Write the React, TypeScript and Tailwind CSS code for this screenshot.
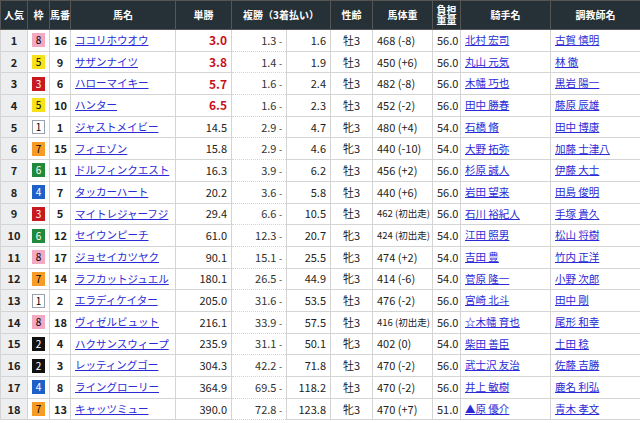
const rows: [number, number, number, string, string, string, string, string, string, string, string, string][] = [
  [1, 8, 16, 'ココリホウオウ', '3.0', '1.3', '1.6', '牡3', '468 (-8)', '56.0', '北村 宏司', '古賀 慎明'],
  [2, 5, 9, 'サザンナイツ', '3.8', '1.4', '1.9', '牡3', '450 (+6)', '56.0', '丸山 元気', '林 徹'],
  [3, 3, 6, 'ハローマイキー', '5.7', '1.6', '2.4', '牡3', '482 (-8)', '56.0', '木幡 巧也', '黒岩 陽一'],
  [4, 5, 10, 'ハンター', '6.5', '1.6', '2.3', '牡3', '452 (-2)', '56.0', '田中 勝春', '藤原 辰雄'],
  [5, 1, 1, 'ジャストメイビー', '14.5', '2.9', '4.7', '牝3', '480 (+4)', '54.0', '石橋 脩', '田中 博康'],
  [6, 7, 15, 'フィエゾン', '15.8', '2.9', '4.6', '牝3', '440 (-10)', '54.0', '大野 拓弥', '加藤 士津八'],
  [7, 6, 11, 'ドルフィンクエスト', '16.3', '3.9', '6.2', '牡3', '456 (+2)', '56.0', '杉原 誠人', '伊藤 大士'],
  [8, 4, 7, 'タッカーハート', '20.2', '3.6', '5.8', '牡3', '440 (+6)', '56.0', '岩田 望来', '田島 俊明'],
  [9, 3, 5, 'マイトレジャーフジ', '29.4', '6.6', '10.5', '牡3', '462 (初出走)', '56.0', '石川 裕紀人', '手塚 貴久'],
  [10, 6, 12, 'セイウンピーチ', '61.0', '12.3', '20.7', '牝3', '424 (初出走)', '54.0', '江田 照男', '松山 将樹'],
  [11, 8, 17, 'ジョセイカツヤク', '90.1', '15.1', '25.5', '牝3', '474 (+2)', '54.0', '吉田 豊', '竹内 正洋'],
  [12, 7, 14, 'ラフカットジュエル', '180.1', '26.5', '44.9', '牝3', '414 (-6)', '54.0', '菅原 隆一', '小野 次郎'],
  [13, 1, 2, 'エラディケイター', '205.0', '31.6', '53.5', '牡3', '476 (-2)', '56.0', '宮崎 北斗', '田中 剛'],
  [14, 8, 18, 'ヴィゼルビュット', '216.1', '33.9', '57.5', '牡3', '416 (初出走)', '56.0', '☆木幡 育也', '尾形 和幸'],
  [15, 2, 4, 'ハクサンスウィープ', '235.9', '31.1', '50.1', '牝3', '402 (0)', '54.0', '柴田 善臣', '土田 稔'],
  [16, 2, 3, 'レッティングゴー', '304.3', '42.2', '71.8', '牡3', '470 (-2)', '56.0', '武士沢 友治', '佐藤 吉勝'],
  [17, 4, 8, 'ライングローリー', '364.9', '69.5', '118.2', '牡3', '470 (-2)', '56.0', '井上 敏樹', '鹿名 利弘'],
  [18, 7, 13, 'キャッツミュー', '390.0', '72.8', '123.8', '牝3', '470 (+7)', '51.0', '▲原 優介', '青木 孝文'],
];

const waku: Record<number, string> = {
  1: 'bg-white text-black border border-gray-400',
  2: 'bg-[#111] text-white',
  3: 'bg-[#c8191e] text-white',
  4: 'bg-[#1e5fc8] text-white',
  5: 'bg-[#f7e11a] text-black',
  6: 'bg-[#1f8a3b] text-white',
  7: 'bg-[#f59b26] text-black',
  8: 'bg-[#f3a9c2] text-black',
};

const th = 'border border-[#555] font-bold text-white text-[10px] text-center leading-none p-0';
const td = 'border border-[#d4d4d4] px-1 py-0 leading-none whitespace-nowrap overflow-hidden';

export default function App() {
  return (
    <div className="w-[640px] h-[423px] overflow-hidden bg-white" style={{ fontFamily: '"Noto Sans CJK JP", "Liberation Sans", sans-serif' }}>
      <table className="w-[640px] table-fixed border-collapse text-[11px] text-[#222]">
        <colgroup>
          <col className="w-[27px]" />
          <col className="w-[22px]" />
          <col className="w-[21px]" />
          <col className="w-[105px]" />
          <col className="w-[56px]" />
          <col className="w-[55px]" />
          <col className="w-[44px]" />
          <col className="w-[42px]" />
          <col className="w-[60px]" />
          <col className="w-[28px]" />
          <col className="w-[90px]" />
          <col className="w-[90px]" />
        </colgroup>
        <thead>
          <tr className="h-[29px] bg-[#263137]">
            <th className={th}>人気</th>
            <th className={th}>枠</th>
            <th className={th}>馬番</th>
            <th className={th}>馬名</th>
            <th className={th}>単勝</th>
            <th className={th} colSpan={2}>複勝（3着払い）</th>
            <th className={th}>性齢</th>
            <th className={th}>馬体重</th>
            <th className={`${th} leading-[12px]`}>負担<br />重量</th>
            <th className={th}>騎手名</th>
            <th className={th}>調教師名</th>
          </tr>
        </thead>
        <tbody>
          {rows.map((r) => (
            <tr key={r[0]} className="h-[21.7px]">
              <td className={`${td} bg-[#eceef0] text-center font-semibold`}>{r[0]}</td>
              <td className={`${td} text-center`}>
                <span className={`inline-flex w-[13px] h-[14px] items-center justify-center text-[10px] leading-none ${waku[r[1]]}`}>{r[1]}</span>
              </td>
              <td className={`${td} text-center font-semibold px-0`}>{r[2]}</td>
              <td className={`${td} text-[10.5px]`}><span className="text-[#2b2bd6] underline">{r[3]}</span></td>
              <td className={`${td} text-right ${r[0] <= 4 ? 'text-[#c8101a] font-bold text-[12px]' : ''}`}>{r[4]}</td>
              <td className="border-y border-l border-[#d4d4d4] border-r border-r-[#ccc] border-dotted text-right pr-1 py-0 leading-none text-[#333]">{r[5]} <span className="text-[9px]">-</span></td>
              <td className={`${td} text-right`}>{r[6]}</td>
              <td className={`${td} text-center`}>{r[7]}</td>
              <td className={`${td} ${r[8].includes('初') ? 'text-[9.5px]' : ''}`}>{r[8]}</td>
              <td className={`${td} text-right px-0.5`}>{r[9]}</td>
              <td className={`${td} text-[10.5px]`}><span className="text-[#2b2bd6] underline">{r[10]}</span></td>
              <td className={`${td} text-[10.5px]`}><span className="text-[#2b2bd6] underline">{r[11]}</span></td>
            </tr>
          ))}
        </tbody>
      </table>
    </div>
  );
}
